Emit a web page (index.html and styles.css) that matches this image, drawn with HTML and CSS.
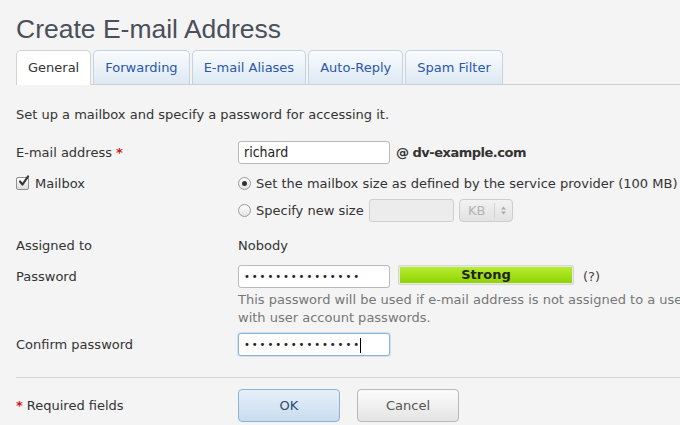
FILE: index.html
```html
<!DOCTYPE html>
<html>
<head>
<meta charset="utf-8">
<link rel="stylesheet" href="styles.css">
</head>
<body>
<div class="page">
  <h1 class="title">Create E-mail Address</h1>
  <div class="tabs">
    <div class="tab active">General</div>
    <div class="tab">Forwarding</div>
    <div class="tab">E-mail Aliases</div>
    <div class="tab">Auto-Reply</div>
    <div class="tab">Spam Filter</div>
  </div>
  <p class="desc">Set up a mailbox and specify a password for accessing it.</p>

  <div class="row r-email">
    <div class="label">E-mail address <span class="req">*</span></div>
    <div class="value">
      <div class="input">richard</div>
      <span class="domain">@ dv-example.com</span>
    </div>
  </div>

  <div class="row r-mailbox">
    <div class="label">
      <span class="checkbox"><svg width="13" height="13" viewBox="0 0 13 13"><path d="M3 6.5 L5.5 9.5 L11 1.5" fill="none" stroke="#333" stroke-width="2.2" stroke-linecap="round" stroke-linejoin="round"/></svg></span>
      Mailbox
    </div>
    <div class="value">
      <span class="radio checked"></span>
      <span>Set the mailbox size as defined by the service provider (100 MB)</span>
    </div>
  </div>

  <div class="row r-specify">
    <div class="label"></div>
    <div class="value">
      <span class="radio"></span>
      <span>Specify new size</span>
      <div class="input small disabled"></div>
      <div class="select disabled"><span class="kb">KB</span><span class="arrows"><svg width="7" height="11" viewBox="0 0 7 11"><path d="M1 4.5 L3.5 1.5 L6 4.5 Z M1 6.5 L3.5 9.5 L6 6.5 Z" fill="#a9a9a9"/></svg></span></div>
    </div>
  </div>

  <div class="row r-assigned">
    <div class="label">Assigned to</div>
    <div class="value">Nobody</div>
  </div>

  <div class="row r-password">
    <div class="label">Password</div>
    <div class="value">
      <div class="input dots">•••••••••••••••</div>
      <div class="strength"><div class="bar">Strong</div></div>
      <span class="hint">(?)</span>
    </div>
  </div>

  <div class="row r-help">
    <div class="label"></div>
    <div class="value help">This password will be used if e-mail address is not assigned to a user<br>with user account passwords.</div>
  </div>

  <div class="row r-confirm">
    <div class="label">Confirm password</div>
    <div class="value">
      <div class="input dots focus">•••••••••••••••<span class="caret"></span></div>
    </div>
  </div>

  <div class="divider"></div>

  <div class="row r-buttons">
    <div class="label"><span class="req">*</span> Required fields</div>
    <div class="value buttons">
      <div class="btn ok">OK</div>
      <div class="btn cancel">Cancel</div>
    </div>
  </div>
</div>
</body>
</html>
```

FILE: styles.css
```css
html, body {
  margin: 0;
  padding: 0;
  background: #f4f4f4;
  overflow: hidden;
}
body {
  width: 680px;
  height: 425px;
  font-family: "DejaVu Sans", Verdana, sans-serif;
  font-size: 13px;
  color: #333;
}
.page {
  padding-left: 16px;
}
.title {
  margin: 0;
  padding-top: 14px;
  height: 50px;
  box-sizing: border-box;
  font-family: "Liberation Sans", Arial, sans-serif;
  font-weight: normal;
  font-size: 26.5px;
  line-height: 30px;
  color: #4a4f5a;
  white-space: nowrap;
}
.tabs {
  display: flex;
  gap: 2px;
  height: 35px;
  border-bottom: 1px solid #cfcfcf;
  box-sizing: border-box;
  align-items: flex-end;
}
.tab {
  height: 34px;
  box-sizing: border-box;
  padding: 0 11px;
  line-height: 33px;
  border: 1px solid #c6d3df;
  border-bottom: none;
  border-radius: 5px 5px 0 0;
  background: linear-gradient(#f9fbfd, #dde9f4);
  color: #2a57ad;
  white-space: nowrap;
}
.tab.active {
  background: #fff;
  color: #333;
  height: 35px;
  margin-bottom: -1px;
  border-color: #d3d3d3;
}
.desc {
  margin: 21px 0 0;
  line-height: 18px;
  white-space: nowrap;
}
.row {
  display: flex;
  align-items: center;
}
.label {
  width: 222px;
  flex: none;
  display: flex;
  align-items: center;
  gap: 4px;
  white-space: nowrap;
}
.value {
  display: flex;
  align-items: center;
  white-space: nowrap;
}
.req {
  color: #d2161c;
  font-weight: bold;
}
.r-email { margin-top: 17px; height: 23px; }
.r-mailbox { margin-top: 10px; height: 18px; align-items: flex-start; }
.r-specify { margin-top: 7px; height: 23px; }
.r-assigned { margin-top: 14px; height: 18px; }
.r-password { margin-top: 11px; height: 23px; }
.r-help { margin-top: 3px; align-items: flex-start; }
.r-confirm { margin-top: 6px; height: 23px; }
.r-buttons { margin-top: 11px; height: 33px; }

.input {
  width: 152px;
  height: 23px;
  box-sizing: border-box;
  border: 1px solid #b9b9b9;
  border-radius: 3px;
  background: #fff;
  padding: 0 5px;
  line-height: 21px;
  font-family: "DejaVu Sans Condensed", "DejaVu Sans", sans-serif;
  font-stretch: condensed;
  font-size: 14px;
  color: #222;
}
.input.dots {
  font-family: "DejaVu Sans", sans-serif;
  font-stretch: normal;
  font-size: 10px;
  letter-spacing: 1.9px;
  color: #222;
}
.input.focus {
  border-color: #8fb2d8;
  box-shadow: 0 0 0 1px #cfe0f2;
}
.caret {
  display: inline-block;
  width: 1px;
  height: 15px;
  background: #000;
  vertical-align: middle;
  margin-left: -1px;
}
.domain {
  font-weight: bold;
  margin-left: 6px;
  letter-spacing: -0.5px;
  color: #333;
}
.checkbox {
  width: 13px;
  height: 13px;
  box-sizing: border-box;
  border: 1px solid #8e8e8e;
  border-radius: 2px;
  background: linear-gradient(#fff, #dcdcdc);
  display: inline-flex;
  position: relative;
  margin-right: 2px;
}
.checkbox svg {
  position: absolute;
  left: 0;
  top: -3px;
}
.radio {
  width: 13px;
  height: 13px;
  box-sizing: border-box;
  border: 1px solid #9a9a9a;
  border-radius: 50%;
  background: linear-gradient(#fff, #e2e2e2);
  display: inline-flex;
  align-items: center;
  justify-content: center;
  margin-right: 5px;
  flex: none;
}
.radio.checked::after {
  content: "";
  width: 5px;
  height: 5px;
  border-radius: 50%;
  background: #333;
}
.r-mailbox .value, .r-mailbox .label { height: 18px; }
.input.small {
  width: 85px;
  margin-left: 5px;
}
.input.disabled {
  background: #ececec;
  border-color: #cfcfcf;
}
.select {
  width: 54px;
  height: 23px;
  box-sizing: border-box;
  margin-left: 5px;
  border: 1px solid #cdcdcd;
  border-radius: 4px;
  background: linear-gradient(#f2f2f2, #e2e2e2);
  display: flex;
  align-items: center;
  color: #b3b3b3;
}
.select .kb {
  flex: 1;
  text-align: center;
  border-right: 1px solid #d3d3d3;
  line-height: 15px;
}
.select .arrows {
  width: 17px;
  display: flex;
  justify-content: center;
}
.strength {
  width: 176px;
  height: 20px;
  box-sizing: border-box;
  margin-left: 8px;
  border: 1px solid #d6d6d6;
  border-radius: 2px;
  background: #e8e8e8;
  padding: 1px;
  align-self: flex-start;
}
.bar {
  height: 100%;
  background: linear-gradient(#b6ec30, #8fd402);
  text-align: center;
  font-weight: bold;
  line-height: 16px;
  color: #222;
}
.hint {
  margin-left: 9px;
  color: #444;
}
.help {
  color: #777;
  line-height: 18px;
  white-space: nowrap;
}
.divider {
  margin-top: 21px;
  height: 1px;
  background: #d4d4d4;
}
.buttons {
  gap: 17px;
}
.btn {
  width: 102px;
  height: 33px;
  box-sizing: border-box;
  border-radius: 4px;
  text-align: center;
  line-height: 31px;
  font-size: 13px;
}
.btn.ok {
  border: 1px solid #8fb2d4;
  background: linear-gradient(#e6f0fa, #c9dcee);
  color: #2b4a70;
}
.btn.cancel {
  border: 1px solid #b9b9b9;
  background: linear-gradient(#fbfbfb, #e4e4e4);
  color: #555;
}
```
